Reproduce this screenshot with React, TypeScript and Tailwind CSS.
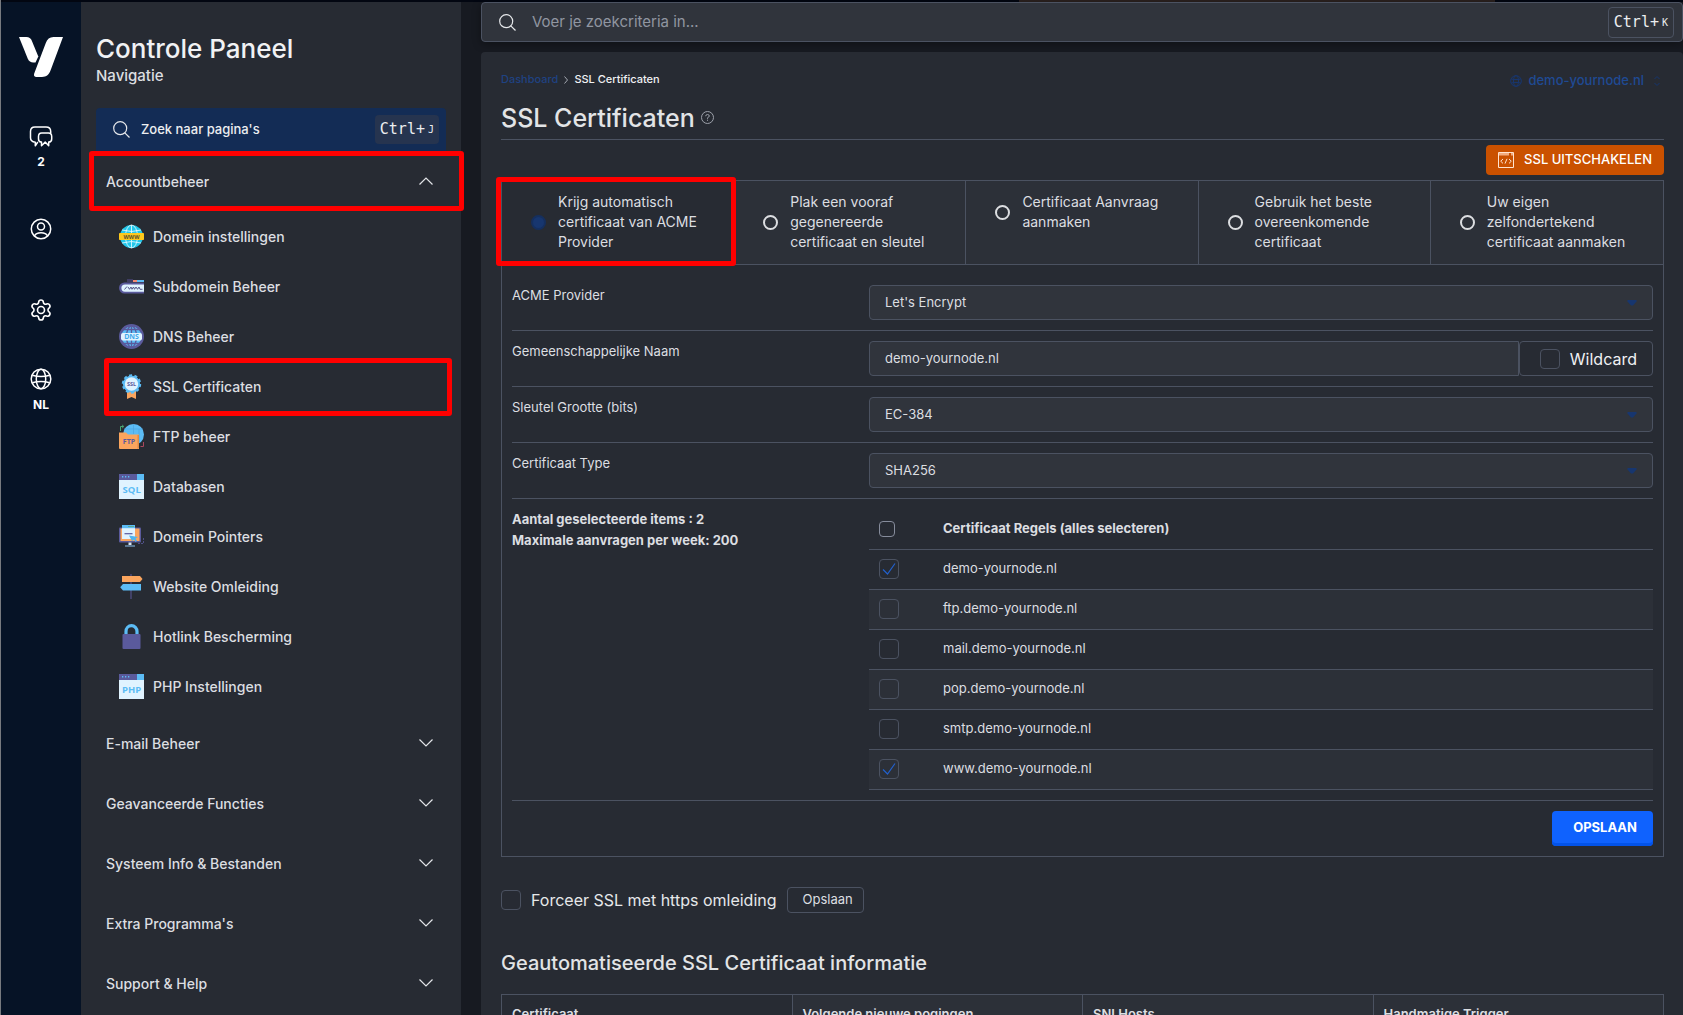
import React from "react";

/* ---------- rail icons ---------- */

function Logo() {
  return (
    <svg className="h-10 w-11" viewBox="0 0 44 40" fill="#fff" aria-label="Logo">
      <path d="M0 0H7.500C10 0 11.800 1.300 12.800 3.700L19.300 19.500L16.500 25.600H14.200C11.800 25.600 9.800 24.200 8.900 22Z" />
      <path d="M34.500 0H44L31.800 32.800C30 37.600 27.500 40 23 40H17.500C15.400 40 14.400 38.700 15.200 36.600L26.700 6.200C28.200 2.100 30.600 0 34.500 0Z" />
    </svg>
  );
}

function ChatIcon() {
  return (
    <svg className="size-6" viewBox="0 0 24 24" fill="none" stroke="#fff" strokeWidth="1.500" strokeLinejoin="round">
      <path d="M8.800 17L6.300 20.800V17.200C3 16.900 1.500 15.400 1.500 12.800V6.500C1.500 3.500 3 2 6 2H17C20 2 21.700 3.500 21.700 6.500V8" />
      <path d="M9.500 11.500C9.500 9.100 10.600 8 12.700 8H19.500C21.600 8 22.700 9.100 22.700 11.500V13.900C22.700 16 21.600 17 19.700 17.100V20.700L16.200 17.100L12.500 20.700V17.100C10.600 17 9.500 16 9.500 13.900Z" />
    </svg>
  );
}

function UserIcon() {
  return (
    <svg className="size-[22px]" viewBox="0 0 22 22" fill="none" stroke="#fff" strokeWidth="1.500">
      <circle cx="11" cy="11" r="9.700" />
      <circle cx="11" cy="8.500" r="3.500" />
      <path d="M4.500 18C5.500 15.500 8 14.700 11 14.700S16.500 15.500 17.500 18" />
    </svg>
  );
}

function GearIcon() {
  return (
    <svg className="size-[22px]" viewBox="1 1 22 22" fill="none" stroke="#fff" strokeWidth="1.600" strokeLinejoin="round">
      <path d="M9.670 4.136a2.340 2.340 0 0 1 4.660 0a2.340 2.340 0 0 0 3.319 1.915a2.340 2.340 0 0 1 2.330 4.033a2.340 2.340 0 0 0 0 3.831a2.340 2.340 0 0 1-2.330 4.033a2.340 2.340 0 0 0-3.319 1.915a2.340 2.340 0 0 1-4.660 0a2.340 2.340 0 0 0-3.320-1.915a2.340 2.340 0 0 1-2.330-4.033a2.340 2.340 0 0 0 0-3.831A2.340 2.340 0 0 1 6.350 6.051a2.340 2.340 0 0 0 3.319-1.915" />
      <circle cx="12" cy="12" r="3.500" />
    </svg>
  );
}

function GlobeIcon({ className, width }: { className: string; width: number }) {
  return (
    <svg className={className} viewBox="0 0 22 22" fill="none" stroke="currentColor" strokeWidth={width}>
      <circle cx="11" cy="11" r="9.800" />
      <ellipse cx="11" cy="11" rx="4.700" ry="9.800" />
      <path d="M2.300 7.300C7 8.700 15 8.700 19.700 7.300M2.300 14.700C7 13.300 15 13.300 19.700 14.700" />
    </svg>
  );
}

/* ---------- navigation icons ---------- */

const iconText = {
  fontFamily: '"Open Sans", sans-serif',
  fontWeight: 700,
  textAnchor: "middle" as const,
};

function DomainIcon() {
  return (
    <svg viewBox="0 0 25 25" className="size-[25px] shrink-0">
      <circle cx="12.500" cy="12.500" r="11.500" fill="#22c7ea" />
      <g fill="none" stroke="#d8f7ff" strokeWidth="0.900">
        <ellipse cx="12.500" cy="12.500" rx="6" ry="11.500" />
        <path d="M12.500 1V24M3 6Q12.500 9 22 6M3 19Q12.500 16 22 19" />
      </g>
      <rect y="9" width="25" height="7" rx="0.800" fill="#fdc81c" />
      <text x="12.500" y="14.600" fontSize="5.500" fill="#5d5028" {...iconText}>WWW</text>
    </svg>
  );
}

function SubdomainIcon() {
  return (
    <svg viewBox="0 0 25 25" className="size-[25px] shrink-0">
      <path d="M8 5H14V8H8Z" fill="#3f3d63" />
      <path d="M14 6H18V8H14Z" fill="#f28a76" />
      <path d="M18 6H25V8H18Z" fill="#5cbcf5" />
      <path d="M25 8.500H5.500A5.200 5.200 0 0 0 5.500 19.500H25Z" fill="#5a5a9c" />
      <path d="M25 10.500H6A3.500 3.500 0 0 0 6 17.700H25Z" fill="#e0f3ff" />
      <path d="M5.500 15.500L8 12.500M9 13L10.500 15.300L12 13L13 15.300L14.500 13L15.500 15.300L17 13L18.500 15.300L20 13L21 15.300H23.500" fill="none" stroke="#494880" strokeWidth="0.900" />
    </svg>
  );
}

function DnsIcon() {
  return (
    <svg viewBox="0 0 25 25" className="size-[25px] shrink-0">
      <circle cx="12.500" cy="12.500" r="12.500" fill="#5a5a9c" />
      <circle cx="12.500" cy="12.500" r="10" fill="#5cbcf5" />
      <g fill="none" stroke="#5a5a9c" strokeWidth="1.300">
        <ellipse cx="12.500" cy="12.500" rx="5" ry="10.500" />
        <path d="M12.500 2V23M4 5.500H21M4 19.500H21" />
      </g>
      <rect x="2" y="9" width="21" height="7.500" rx="2" fill="#e0f3ff" />
      <text x="12.500" y="15.200" fontSize="7" fill="#3fa9ec" {...iconText}>DNS</text>
    </svg>
  );
}

function SslIcon() {
  return (
    <svg viewBox="0 0 25 25" className="size-[25px] shrink-0">
      <path d="M8 17H17V25L12.500 23L8 25Z" fill="#faa55e" />
      <circle cx="12.500" cy="10" r="8.600" fill="#5cbcf5" />
      <circle cx="12.500" cy="10" r="8.600" fill="none" stroke="#5cbcf5" strokeWidth="2.200" strokeDasharray="3 2.400" />
      <circle cx="12.500" cy="10" r="6.700" fill="#e0f3ff" />
      <text x="12.500" y="12" fontSize="5.500" fill="#5a5a9c" {...iconText}>SSL</text>
    </svg>
  );
}

function FtpIcon() {
  return (
    <svg viewBox="0 0 25 25" className="size-[25px] shrink-0">
      <circle cx="14.500" cy="10.500" r="10.500" fill="#5cbcf5" />
      <path d="M14.500 0V10M5 5H24M20 5V18" stroke="#4ba4df" strokeWidth="0.700" fill="none" />
      <path d="M1.500 7V2.500H4M3.200 1L4.800 2.500L3.200 4" fill="none" stroke="#4aa875" strokeWidth="1" />
      <path d="M24.500 18V22.500H21.500" fill="none" stroke="#a8475e" strokeWidth="1" />
      <path d="M0 8.500H7L9 10.500H20V25H1Q0 25 0 24Z" fill="#faa55e" />
      <path d="M18.500 11H20V24L18.500 25Z" fill="#e08b45" />
      <text x="10" y="20.200" fontSize="7" fill="#5a5a9c" {...iconText}>FTP</text>
    </svg>
  );
}

function WindowIcon({ label }: { label: string }) {
  return (
    <svg viewBox="0 0 25 25" className="size-[25px] shrink-0">
      <rect width="25" height="25" fill="#e0f3ff" />
      <rect width="18" height="6" fill="#5a5a9c" />
      <rect x="18" width="7" height="6" fill="#5cbcf5" />
      <path d="M3 2.700H4.300M6 2.700H7.300M9 2.700H10.300" stroke="#5cbcf5" strokeWidth="1.600" />
      <text x="12.700" y="19" fontSize="9.500" fill="#5cbcf5" {...iconText}>{label}</text>
    </svg>
  );
}

function PointerIcon() {
  return (
    <svg viewBox="0 0 25 25" className="size-[25px] shrink-0">
      <rect y="3.500" width="22" height="15" rx="1" fill="#5a5a9c" />
      <rect x="1.500" y="4.500" width="19" height="12.500" fill="#faa55e" />
      <rect x="3" y="1" width="13" height="14" fill="#e0f3ff" />
      <rect x="3" y="1" width="13" height="3.200" fill="#5cbcf5" />
      <path d="M9 2.500H15" stroke="#5fa88d" strokeWidth="1" />
      <path d="M5.500 9.700H13.500" stroke="#5a5a9c" strokeWidth="1.200" />
      <path d="M10 11.500L19 13L16.500 14.500L18 17L16.500 18L15 15.500L13 17Z" fill="#4eb4ee" />
      <path d="M9.500 18.500H12.500V21H9.500Z" fill="#d6e6f4" />
      <path d="M6 22H16" stroke="#61809e" strokeWidth="1.800" />
      <path d="M19 19.500H24.500V14" fill="none" stroke="#5a5a9c" strokeWidth="0.800" strokeDasharray="2 1" />
    </svg>
  );
}

function SignpostIcon() {
  return (
    <svg viewBox="0 0 25 25" className="size-[25px] shrink-0">
      <rect x="11.200" width="1.600" height="25" fill="#494873" />
      <path d="M3 2H21L23.500 5L21 8H3Z" fill="#faa55e" />
      <path d="M22 10H4L1.200 13.200L4 16.500H22Z" fill="#5cbcf5" />
    </svg>
  );
}

function LockIcon() {
  return (
    <svg viewBox="0 0 25 25" className="size-[25px] shrink-0">
      <path d="M7 11V7.500A5.500 5.800 0 0 1 18 7.500V11" fill="none" stroke="#5cbcf5" strokeWidth="3.200" />
      <rect x="3.500" y="10" width="18" height="15" rx="1" fill="#5a5a9c" />
    </svg>
  );
}

/* ---------- shared small drawings ---------- */

function SearchIcon() {
  return (
    <svg className="size-[17px] shrink-0" viewBox="0 0 17 17" fill="none" stroke="#e6e8eb" strokeWidth="1.200">
      <circle cx="7.200" cy="7.200" r="6.500" />
      <path d="M11.800 11.800L16.500 16.500" />
    </svg>
  );
}

function Chevron({ up = false }: { up?: boolean }) {
  return (
    <svg className="h-2 w-3.5 shrink-0" viewBox="0 0 14 8" fill="none" stroke="#e2e4e8" strokeWidth="1.200">
      <path d={up ? "M0.500 7.500L7 1L13.500 7.500" : "M0.500 0.500L7 7L13.500 0.500"} />
    </svg>
  );
}

function Kbd({ letter, className }: { letter: string; className: string }) {
  return (
    <kbd className={"flex items-center gap-[3px] rounded px-[5px] font-['DejaVu_Sans_Mono',monospace] text-[15px] text-[#eceef0] " + className}>
      Ctrl+<span className="text-[10px]">{letter}</span>
    </kbd>
  );
}

function CheckBox({ id, checked = false, label, small = false }: { id: string; checked?: boolean; label?: string; small?: boolean }) {
  return (
    <span className={(small ? "size-4 " : "size-5 ") + "relative block shrink-0"}>
      <input
        id={id}
        type="checkbox"
        defaultChecked={checked}
        aria-label={label}
        className={(small ? "border-[#868c9c] " : "border-[#4b5261] ") + "peer block size-full appearance-none rounded border bg-transparent"}
      />
      <svg className="pointer-events-none absolute inset-0 hidden size-full peer-checked:block" viewBox="0 0 20 20" fill="none" stroke="#2260cc" strokeWidth="1.200">
        <path d="M4 10.500L8.500 15L16 4.500" />
      </svg>
    </span>
  );
}

const redBox = "pointer-events-none absolute z-10 rounded-[3px] border-[5px] border-[#ff0000]";

/* ---------- sidebar ---------- */

const pages = [
  { label: "Domein instellingen", icon: <DomainIcon /> },
  { label: "Subdomein Beheer", icon: <SubdomainIcon /> },
  { label: "DNS Beheer", icon: <DnsIcon /> },
  { label: "SSL Certificaten", icon: <SslIcon />, marked: true },
  { label: "FTP beheer", icon: <FtpIcon /> },
  { label: "Databasen", icon: <WindowIcon label="SQL" /> },
  { label: "Domein Pointers", icon: <PointerIcon /> },
  { label: "Website Omleiding", icon: <SignpostIcon /> },
  { label: "Hotlink Bescherming", icon: <LockIcon /> },
  { label: "PHP Instellingen", icon: <WindowIcon label="PHP" /> },
];

const groups = ["E-mail Beheer", "Geavanceerde Functies", "Systeem Info & Bestanden", "Extra Programma's", "Support & Help"];

function Rail() {
  return (
    <div className="flex w-20 shrink-0 flex-col items-center bg-[#061326] pt-[35px] text-[12px] leading-4 font-bold text-white">
      <a href="#home"><Logo /></a>
      <button aria-label="Berichten" className="mt-12 flex flex-col items-center gap-[5px]">
        <ChatIcon />
        <span>2</span>
      </button>
      <button aria-label="Account" className="mt-12"><UserIcon /></button>
      <button aria-label="Instellingen" className="mt-[59px]"><GearIcon /></button>
      <button className="mt-[47px] flex flex-col items-center gap-[7px]">
        <GlobeIcon className="size-[22px]" width={1.5} />
        <span>NL</span>
      </button>
    </div>
  );
}

function Sidebar() {
  return (
    <aside className="w-[380px] shrink-0 bg-[#272b33] px-[15px] pt-[31px] text-[14px] font-medium text-[#dcdee1]">
      <h2 className="text-[26px] leading-8 text-[#f1f2f4]">Controle Paneel</h2>
      <p className="text-[15px] leading-[22px]">Navigatie</p>
      <button className="mt-[21px] flex h-[43px] w-[350px] items-center rounded-t bg-[#132c55] pr-[7px] pl-[17px] text-[#eceef0]">
        <SearchIcon />
        <span className="ml-[11px] flex-1 text-left text-[13px]">Zoek naar pagina's</span>
        <Kbd letter="J" className="h-[29px] bg-[#26344f]" />
      </button>
      <nav>
        <div className="relative">
          <button aria-expanded="true" className="flex h-[60px] w-full items-center justify-between pr-[13px] pl-2.5">
            Accountbeheer
            <Chevron up />
          </button>
          <span className={redBox + " top-0 -right-[18px] bottom-0 -left-[7px]"} />
        </div>
        <ul>
          {pages.map((p) => (
            <li key={p.label} className="relative">
              <a href="#page" className="flex h-[50px] items-center gap-[9px] pt-px pl-[23px]">
                {p.icon}
                {p.label}
              </a>
              {p.marked && <span className={redBox + " -top-[3px] -right-1.5 -bottom-[5px] left-2"} />}
            </li>
          ))}
        </ul>
        <div className="mt-0.5">
          {groups.map((g) => (
            <button key={g} aria-expanded="false" className="flex h-[60px] w-full items-center justify-between pr-[13px] pl-2.5">
              {g}
              <Chevron />
            </button>
          ))}
        </div>
      </nav>
    </aside>
  );
}

/* ---------- main ---------- */

const modes = [
  "Krijg automatisch certificaat van ACME Provider",
  "Plak een vooraf gegenereerde certificaat en sleutel",
  "Certificaat Aanvraag aanmaken",
  "Gebruik het beste overeenkomende certificaat",
  "Uw eigen zelfondertekend certificaat aanmaken",
];

const hosts = [
  { name: "demo-yournode.nl", on: true },
  { name: "ftp.demo-yournode.nl", on: false },
  { name: "mail.demo-yournode.nl", on: false },
  { name: "pop.demo-yournode.nl", on: false },
  { name: "smtp.demo-yournode.nl", on: false },
  { name: "www.demo-yournode.nl", on: true },
];

function Row({ id, label, children }: { id: string; label: string; children: React.ReactNode }) {
  return (
    <div className="grid grid-cols-[357fr_784fr] border-b border-[#4b5261] py-2.5">
      <label htmlFor={id} className="leading-5">{label}</label>
      {children}
    </div>
  );
}

function SelectBox({ id, value }: { id: string; value: string }) {
  return (
    <div className="relative">
      <select id={id} defaultValue={value} className="block h-[35px] w-full appearance-none rounded border border-[#4b5261] bg-[#30343c] px-[15px]">
        <option>{value}</option>
      </select>
      <svg className="pointer-events-none absolute top-[15px] right-4 h-1.5 w-2.5" viewBox="0 0 10 6" fill="#17366f">
        <path d="M0.500 0H9.500V1.500L6 5.500H4L0.500 1.500Z" />
      </svg>
    </div>
  );
}

function Main() {
  return (
    <main className="flex min-w-0 flex-1 flex-col pl-5 text-[13px] text-[#dcdee1]">
      <div className="flex h-10 shrink-0 items-center rounded border border-[#4b5261] bg-[#30343c] pr-2 pl-[17px] shadow-[0_2px_8px_rgba(0,0,0,0.35)]">
        <SearchIcon />
        <input aria-label="Zoeken" placeholder="Voer je zoekcriteria in..." className="ml-4 min-w-0 flex-1 bg-transparent text-[15px] outline-none placeholder:text-[#9096a1]" />
        <Kbd letter="K" className="h-[31px] border border-[#4b5261]" />
      </div>

      <div className="mt-2.5 flex-1 rounded-t bg-[#272b33] pt-4 pr-[19px] pl-5">
        <div className="flex h-[22px] items-center justify-between">
          <nav aria-label="Kruimelpad" className="flex items-center gap-1.5 text-[11px] font-medium">
            <a href="#dashboard" className="text-[#1f4282]">Dashboard</a>
            <svg className="mt-0.5 h-2 w-1" viewBox="0 0 4 8" fill="none" stroke="#a5a9b2"><path d="M0.500 0.500L3.500 4L0.500 7.500" /></svg>
            <span className="text-[#f0f1f3]">SSL Certificaten</span>
          </nav>
          <button className="flex items-center gap-1.5 pt-1 pr-1 text-[13px] font-medium text-[#1f4a93]">
            <GlobeIcon className="size-3 text-[#17366f]" width={1.800} />
            demo-yournode.nl
            <svg className="ml-1 h-2.5 w-1.5" viewBox="0 0 6 10" fill="none" stroke="#17366f"><path d="M0.500 3L3 0.500L5.500 3M0.500 7L3 9.500L5.500 7" /></svg>
          </button>
        </div>
        <div className="mt-2.5 flex h-10 items-center gap-1.5 border-b border-[#4b5261] pb-1">
          <h1 className="text-[25px] leading-8 font-medium text-[#e2e4e6]">SSL Certificaten</h1>
          <svg className="size-[13px]" viewBox="0 0 13 13" fill="none" stroke="#9da1aa">
            <circle cx="6.500" cy="6.500" r="6" />
            <path d="M4.700 5.200Q4.800 3.500 6.500 3.500T8.300 5Q8.300 6 6.500 6.800V7.800M6.500 8.700V9.800" />
          </svg>
        </div>

        <div className="mt-[5px] flex justify-end">
          <button className="flex h-[30px] items-center gap-2.5 rounded bg-[#ca5100] px-3 text-[13px] font-medium text-white">
            <svg className="size-4" viewBox="0 0 16 16" fill="none" stroke="#ffe3cf" strokeWidth="1">
              <path d="M0.500 0.500H15.500V15.500H0.500Z" />
              <path d="M1 1H11V3.500H1ZM13 1H15V3.500H13Z" fill="#f3ad80" stroke="none" />
              <path d="M5 7L2.700 9.200L5 11.400M11 7L13.300 9.200L11 11.400M9 6.800L7 11.600" />
            </svg>
            SSL UITSCHAKELEN
          </button>
        </div>

        <form className="mt-[5px] border border-[#4b5261]">
          <div className="grid grid-cols-5 divide-x divide-[#4b5261] border-b border-[#4b5261]">
            {modes.map((m, i) => (
              <div key={m} className={(i === 0 ? "" : "bg-[#2c3038] ") + "relative h-[83px] pt-[11px]"}>
                <label className="flex items-center gap-3 pl-[29px] text-[14px] leading-5">
                  <input
                    type="radio"
                    name="mode"
                    defaultChecked={i === 0}
                    className="size-[15px] shrink-0 appearance-none rounded-full border-2 border-[#dcdee1] checked:border-[#152f5e] checked:bg-[#17366f]"
                  />
                  <span className="w-[145px]">{m}</span>
                </label>
                {i === 0 && <span className={redBox + " -top-1 -right-[3px] -bottom-[2px] -left-1.5"} />}
              </div>
            ))}
          </div>

          <div className="p-2.5">
            <Row id="acme" label="ACME Provider"><SelectBox id="acme" value="Let's Encrypt" /></Row>
            <Row id="cn" label="Gemeenschappelijke Naam">
              <div className="flex h-[35px]">
                <input id="cn" defaultValue="demo-yournode.nl" className="min-w-0 flex-1 rounded-l border border-[#4b5261] bg-[#30343c] px-[15px] outline-none" />
                <label htmlFor="wildcard" className="flex items-center gap-2.5 rounded border border-[#4b5261] px-[15px] pl-5 text-[16px] text-[#f0f1f3]">
                  <CheckBox id="wildcard" />
                  Wildcard
                </label>
              </div>
            </Row>
            <Row id="size" label="Sleutel Grootte (bits)"><SelectBox id="size" value="EC-384" /></Row>
            <Row id="type" label="Certificaat Type"><SelectBox id="type" value="SHA256" /></Row>

            <div className="grid grid-cols-[357fr_784fr] border-b border-[#4b5261] py-2.5">
              <div className="leading-[21px] font-bold">
                <p>Aantal geselecteerde items : 2</p>
                <p>Maximale aanvragen per week: 200</p>
              </div>
              <table className="w-full border-collapse text-left">
                <thead>
                  <tr className="h-10 border-b border-[#4b5261]">
                    <th className="w-[74px] pl-2.5"><CheckBox id="all" label="Alles selecteren" small /></th>
                    <th className="font-bold"><label htmlFor="all">Certificaat Regels (alles selecteren)</label></th>
                  </tr>
                </thead>
                <tbody>
                  {hosts.map((h) => (
                    <tr key={h.name} className="h-10 border-b border-[#4b5261] even:bg-[#2c3038]">
                      <td className="pl-2.5"><CheckBox id={h.name} checked={h.on} /></td>
                      <td><label htmlFor={h.name}>{h.name}</label></td>
                    </tr>
                  ))}
                </tbody>
              </table>
            </div>
            <div className="flex justify-end pt-2.5">
              <button type="button" className="h-[35px] rounded bg-[#0f62fe] pr-4 pl-[21px] text-[13px] font-bold text-white shadow-[inset_0_-3px_0_#0353e9]">OPSLAAN</button>
            </div>
          </div>
        </form>

        <div className="mt-[30px] flex items-center gap-2.5">
          <CheckBox id="force" />
          <label htmlFor="force" className="text-[16px] text-[#e6e8ea]">Forceer SSL met https omleiding</label>
          <button className="h-[26px] rounded border border-[#4b5261] pr-2.5 pl-[15px]">Opslaan</button>
        </div>

        <h2 className="mt-9 text-[20px] leading-7 font-medium text-[#e2e4e6]">Geautomatiseerde SSL Certificaat informatie</h2>
        <table className="mt-[17px] w-full table-fixed border-collapse text-left">
          <thead>
            <tr className="h-[41px]">
              {["Certificaat", "Volgende nieuwe pogingen", "SNI Hosts", "Handmatige Trigger"].map((t, i) => (
                <th key={t} className={(i === 0 ? "" : "bg-[#2c3038] ") + "border border-[#4b5261] px-2.5 font-semibold"}>{t}</th>
              ))}
            </tr>
          </thead>
        </table>
      </div>
    </main>
  );
}

export default function App() {
  return (
    <div className="flex h-screen flex-col overflow-hidden border-l border-[#777a7f] bg-[#171a21] font-['Inter',sans-serif]">
      <div className="h-0.5 shrink-0 bg-[linear-gradient(90deg,#020611_60.5%,#2a211f_60.5%,#2a211f_88.8%,#020611_88.8%)]" />
      <div className="flex min-h-0 flex-1">
        <Rail />
        <Sidebar />
        <Main />
      </div>
    </div>
  );
}
